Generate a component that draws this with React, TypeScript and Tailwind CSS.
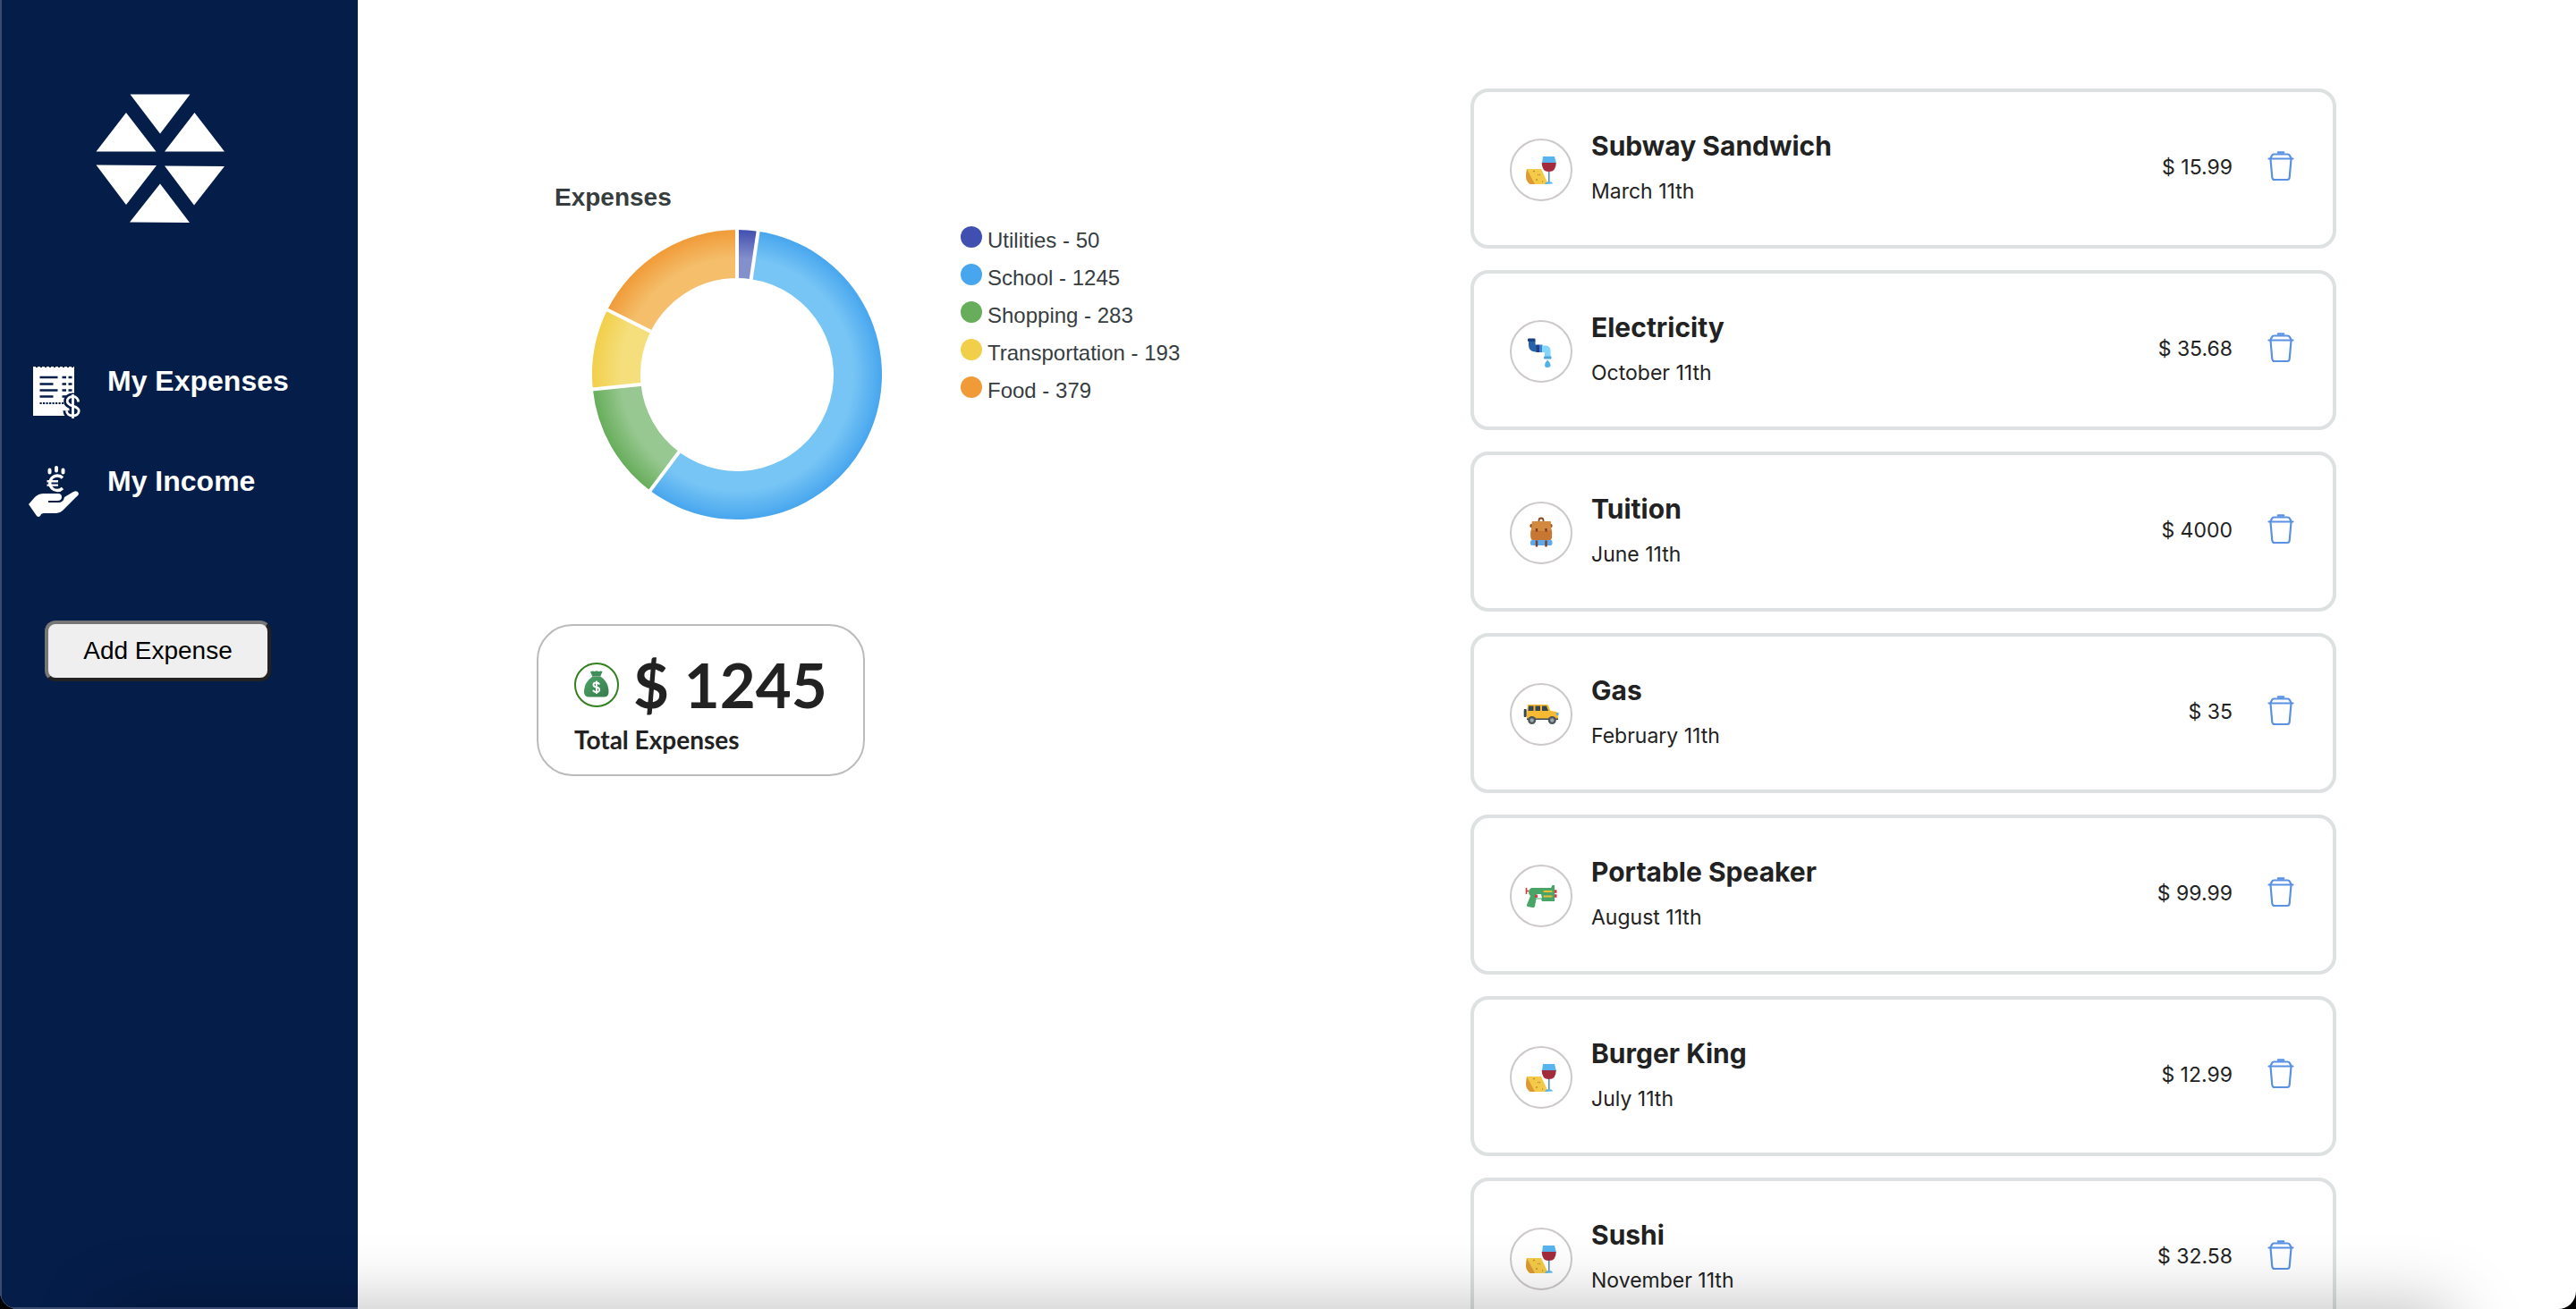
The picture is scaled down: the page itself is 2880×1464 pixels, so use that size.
import React from "react";

type IconName = "food" | "pipe" | "backpack" | "car" | "toy";

type Expense = {
  title: string;
  date: string;
  amount: string;
  icon: IconName;
};

const expenses: Expense[] = [
  { title: "Subway Sandwich", date: "March 11th", amount: "15.99", icon: "food" },
  { title: "Electricity", date: "October 11th", amount: "35.68", icon: "pipe" },
  { title: "Tuition", date: "June 11th", amount: "4000", icon: "backpack" },
  { title: "Gas", date: "February 11th", amount: "35", icon: "car" },
  { title: "Portable Speaker", date: "August 11th", amount: "99.99", icon: "toy" },
  { title: "Burger King", date: "July 11th", amount: "12.99", icon: "food" },
  { title: "Sushi", date: "November 11th", amount: "32.58", icon: "food" },
];

const slices = [
  { label: "Utilities", value: 50, outer: "#4150b0", inner: "#8490cb" },
  { label: "School", value: 1245, outer: "#48a6ee", inner: "#77c5f5" },
  { label: "Shopping", value: 283, outer: "#67ad5b", inner: "#98c891" },
  { label: "Transportation", value: 193, outer: "#f2cf4b", inner: "#f5df7d" },
  { label: "Food", value: 379, outer: "#f19b38", inner: "#f4be6b" },
];

function Logo() {
  return (
    <svg viewBox="0 0 144 144" className="h-36 w-36" fill="#fff" aria-hidden="true">
      <path d="M38.500 .5H105.500L72 44.500ZM.5 64.500H67.500L34 21ZM77 64.500H144L110.500 21ZM.5 79.500L68 80L34 124ZM77 80.500L144 81L110 124.500ZM38 143.500L72 100.500L105 144Z" />
    </svg>
  );
}

function ReceiptIcon() {
  const dollar = "M52.500 41.500c0-3.500-2.500-6-6-6s-6.300 2-6.300 5.200c0 6.600 13 4.200 13 10.800 0 3.500-3 5.500-6.700 5.500s-7-2-7-5.700M46.500 33v27";
  return (
    <svg viewBox="0 0 56 60" className="h-[60px] w-14" fill="none" aria-hidden="true">
      <path d="M2 3H48V57H2Z" fill="#fff" />
      <path d="M2 3H48" stroke="#fff" strokeWidth="2" strokeDasharray="3 2" />
      <path d="M9.500 14h20M9.500 21.500h15M9.500 28.500h20M9.500 35.500h15M34.500 14h4.500M41.500 14h4M34.500 21.500h4.500M41.500 21.500h4M34.500 28.500h4.500M41.500 28.500h4M34.500 35.500h4.500" stroke="#051d49" strokeWidth="2.500" />
      <path d="M9.500 43h28" stroke="#051d49" strokeWidth="2.200" strokeDasharray="2.200 1.300" />
      <path d={dollar} stroke="#051d49" strokeWidth="8" />
      <path d={dollar} stroke="#fff" strokeWidth="2.800" />
    </svg>
  );
}

function IncomeIcon() {
  return (
    <svg viewBox="0 0 56 58" className="h-[58px] w-14" fill="none" aria-hidden="true">
      <g stroke="#fff">
        <path d="M23.500 5.500v3M31 3v3.500M38.500 5.500v3" strokeWidth="4" strokeLinecap="round" />
        <path d="M38 14.500A8.300 8.300 0 1 0 38 26" strokeWidth="3.400" />
        <path d="M20.500 18.300H33M20.500 22.600H33" strokeWidth="2.400" />
      </g>
      <path d="M0 44L7 36Q11 32 17 32H33Q37 32 37 36Q37 40 32 40H22V42H33Q39 42 40 36L50 30Q55 28 56 32Q56 34 53 36L38 51Q35 54 31 54H17Q14 54 13 57Q11 59 9 57Z" fill="#fff" />
    </svg>
  );
}

function MoneyBag() {
  return (
    <svg viewBox="0 0 50 50" className="h-[50px] w-[50px]" aria-hidden="true">
      <defs>
        <linearGradient id="bag" x1="0" y1="0" x2="1" y2="1">
          <stop offset="0" stopColor="#4aa566" />
          <stop offset="1" stopColor="#397b4c" />
        </linearGradient>
      </defs>
      <circle cx="25" cy="25" r="24" fill="#fff" stroke="#34801f" strokeWidth="2" />
      <path d="M18 10q3-1 5 0q2-1.500 4 0q3-1 4.500 0L29.500 15H20Z" fill="#3f8f58" />
      <path d="M20 16H30Q38.500 22 38.500 33Q38.500 38.500 33 38.500H17Q11 38.500 11 33Q11 22 20 16Z" fill="url(#bag)" />
      <path d="M20 15.500h9.500" stroke="#8fa796" strokeWidth="1" />
      <path d="M28.300 24.500q-1-2-3.500-2c-4.500 0-4.500 4.500 0 5s4.500 5.500 0 5.500q-3 0-3.800-2.300M24.900 20.500v14.500" fill="none" stroke="#fff" strokeWidth="1.800" />
    </svg>
  );
}

function FoodArt() {
  return (
    <>
      <path d="M19 34H35L43 51H22Q18 47 18 42Z" fill="#f3cb48" />
      <path d="M19 34L28 51H23Q18 48 18 42Z" fill="#dd9a34" />
      <path d="M26 36.500h2M33 41l1-1M29 46h2M36 48h1M31 40.500h1" stroke="#c58a2c" strokeWidth="1.500" />
      <path d="M37 20H50L52 28H36Z" fill="#57b4ee" />
      <path d="M35.700 27H51.700Q51.700 37 43.700 37Q35.700 37 35.700 27Z" fill="#a32c3c" />
      <path d="M43.800 37v12" stroke="#4a8dbd" strokeWidth="1.500" />
      <path d="M39 51q1-3 4.800-3t4.200 2.500Z" fill="#5bb8ef" />
    </>
  );
}

function PipeArt() {
  return (
    <>
      <path d="M21 23H28.500V26.500Q28.500 28 30 28H32V35.500H28Q21 35 21 28Z" fill="#2862a8" />
      <rect x="20" y="20.500" width="8.500" height="3.500" rx="1" fill="#1d3f86" />
      <rect x="29.500" y="27.500" width="3.500" height="8.500" fill="#203f86" />
      <rect x="33" y="27.500" width="3.500" height="8.500" fill="#3e7fd0" />
      <path d="M36 28.500H40Q45.500 29 45.500 34V41H39V37Q39 36 38 36H36Z" fill="#83d5fa" />
      <rect x="38" y="40.500" width="8.500" height="3" rx="1" fill="#4ba3da" />
      <path d="M42 44.500Q45.500 48 45.500 50.500Q45.500 53 42 53Q39 53 39 50.500Q39 48 42 44.500Z" fill="#4eb3ea" />
    </>
  );
}

function BackpackArt() {
  return (
    <>
      <path d="M32.500 22.500V21q0-2.500 2.500-2.500t2.500 2.500v1.500" stroke="#8a4a20" strokeWidth="1.800" fill="none" />
      <rect x="22.500" y="25" width="25" height="4" rx="1.500" fill="#8a4a20" />
      <path d="M25 22H45.500L46.500 31Q47.500 33 47 41Q46 43.500 43 43.500H27Q24 43 23.500 41Q22.500 34 24 31Z" fill="#c87733" />
      <path d="M25 22H45.500L46 32Q40 34 24 32Z" fill="#d38a40" />
      <rect x="23" y="43" width="24.500" height="6" rx="2" fill="#5da9ee" />
      <path d="M30 30v3.500M40.500 30v3.500M30 43.500v7M40.500 43.500v7" stroke="#7b3d22" strokeWidth="2.400" />
    </>
  );
}

function CarArt() {
  return (
    <>
      <rect x="15.700" y="29" width="3" height="9" rx="1" fill="#39474d" />
      <path d="M19 38H54V41H19Z" fill="#39474d" />
      <path d="M20 24H41.500Q43 24 43.500 26L45.500 31L52 32Q54 33 54 36V39.500H19Q19 30 20 24Z" fill="#f6b933" />
      <path d="M21 25.500h5.500v5.500h-6ZM28.500 25.500h5.500v5.500h-5.500ZM36 25.500h5l2 5.500h-7Z" fill="#36454f" />
      <rect x="52" y="33" width="2.500" height="3" fill="#57b0e6" />
      <circle cx="24.700" cy="41.500" r="4.500" fill="#4a555b" />
      <circle cx="24.700" cy="41.500" r="2.200" fill="#9aa7ad" />
      <circle cx="47.300" cy="41.500" r="4.500" fill="#4a555b" />
      <circle cx="47.300" cy="41.500" r="2.200" fill="#9aa7ad" />
    </>
  );
}

function ToyArt() {
  return (
    <>
      <path d="M18.500 26v7M18.500 29.500h3" stroke="#d8363f" strokeWidth="1.600" />
      <path d="M49 30h3.500M49 35h3.500" stroke="#d8363f" strokeWidth="3.500" />
      <path d="M24 26H46L47.500 23H50V41H36L35 38.500H29.500L28 46.500Q27.500 48.500 25.500 48L20 47Q18.500 46.500 19 45L23 35Q21 34 21 30.500Q21.500 27 24 26Z" fill="#48a567" />
      <path d="M29.500 33h5.500l1 4.500h-7Z" fill="#fff" />
      <path d="M29.500 33.500v3.500" stroke="#d8363f" strokeWidth="2.800" />
      <path d="M38.500 30h8M38.500 35.500h8" stroke="#eebd34" strokeWidth="2.200" strokeLinecap="round" />
    </>
  );
}

const art: Record<IconName, () => React.ReactElement> = {
  food: FoodArt,
  pipe: PipeArt,
  backpack: BackpackArt,
  car: CarArt,
  toy: ToyArt,
};

function TrashIcon() {
  return (
    <svg viewBox="0 0 30 34" className="h-[34px] w-[30px]" fill="none" stroke="#5a91e3" strokeWidth="2.200" strokeLinecap="round" strokeLinejoin="round" aria-hidden="true">
      <path d="M12 1.500h6" strokeWidth="2.500" />
      <path d="M1.500 8.500h27" />
      <path d="M3.500 8l1.500-3q.8-1.500 2.500-1.500h15q1.700 0 2.500 1.500l1.500 3" />
      <path d="M3.500 9l1.800 20.500q.2 2.500 2.700 2.500h14q2.500 0 2.700-2.500L26.500 9" />
    </svg>
  );
}

function point(radius: number, angle: number) {
  return `${162 + radius * Math.sin(angle)} ${162 - radius * Math.cos(angle)}`;
}

function DonutChart() {
  const total = slices.reduce((sum, s) => sum + s.value, 0);
  let start = 0;
  return (
    <svg viewBox="0 0 324 324" className="mt-1 h-[324px] w-[324px] shrink-0" role="img" aria-label="Expenses by category">
      {slices.map((s) => {
        const end = start + (s.value / total) * Math.PI * 2;
        const large = end - start > Math.PI ? 1 : 0;
        const d = `M${point(162, start)}A162 162 0 ${large} 1 ${point(162, end)}L${point(108, end)}A108 108 0 ${large} 0 ${point(108, start)}Z`;
        start = end;
        return (
          <g key={s.label}>
            <radialGradient id={`g-${s.label}`} gradientUnits="userSpaceOnUse" cx="162" cy="162" r="162">
              <stop offset="0.8" stopColor={s.inner} />
              <stop offset="1" stopColor={s.outer} />
            </radialGradient>
            <path d={d} fill={`url(#g-${s.label})`} />
          </g>
        );
      })}
      {slices.map((s, i) => {
        const before = slices.slice(0, i).reduce((sum, p) => sum + p.value, 0);
        const a = (before / total) * Math.PI * 2;
        return <path key={s.label} d={`M${point(104, a)}L${point(166, a)}`} stroke="#fff" strokeWidth="4" />;
      })}
    </svg>
  );
}

function Sidebar() {
  return (
    <aside className="flex w-[400px] shrink-0 flex-col border-l-2 border-[#3a4a70] bg-[#051d49] pt-[105px] font-['Liberation_Sans',Arial,sans-serif]">
      <div className="pl-[105px]">
        <Logo />
      </div>
      <nav className="mt-[159px] flex flex-col gap-[52px] pl-[30px] text-[32px] font-bold leading-9 text-white">
        <a href="#expenses" className="flex h-[60px] items-start gap-[29px]">
          <span className="pl-[3px]">
            <ReceiptIcon />
          </span>
          <span>My Expenses</span>
        </a>
        <a href="#income" className="flex h-[60px] items-start gap-8">
          <IncomeIcon />
          <span>My Income</span>
        </a>
      </nav>
      <button
        type="button"
        className="ml-12 mt-[114px] h-[68px] w-[253px] rounded-xl border-4 border-b-[#222] border-l-[#767676] border-r-[#222] border-t-[#767676] bg-[#efefef] text-[28px] leading-8 text-black"
      >
        Add Expense
      </button>
    </aside>
  );
}

function Summary() {
  return (
    <section className="flex flex-col items-start pt-[205px]">
      <div className="pl-5 font-['Liberation_Sans',Arial,sans-serif] text-[#373d3f]">
        <h2 className="text-[28px] font-bold leading-8">Expenses</h2>
        <div className="mt-4 flex items-start pl-[42px]">
          <DonutChart />
          <ul className="ml-[88px] text-2xl">
            {slices.map((s) => (
              <li key={s.label} className="flex h-[42px] items-start gap-[6px]">
                <svg viewBox="0 0 24 24" className="h-6 w-6" aria-hidden="true">
                  <circle cx="12" cy="12" r="12" fill={s.outer} />
                </svg>
                <span className="leading-8">
                  {s.label} - {s.value}
                </span>
              </li>
            ))}
          </ul>
        </div>
      </div>
      <div className="mt-[117px] rounded-[40px] border-2 border-[#bbb] px-10 pb-4 pt-7 font-[Lato,sans-serif] font-bold text-[#222]">
        <div className="flex items-center gap-4">
          <MoneyBag />
          <span className="text-[69px] leading-[76px]">$ 1245</span>
        </div>
        <p className="text-[28px] leading-[46px]">Total Expenses</p>
      </div>
    </section>
  );
}

function ExpenseCard({ title, date, amount, icon }: Expense) {
  const Art = art[icon];
  return (
    <li className="flex h-[179px] shrink-0 items-start rounded-[20px] border-4 border-[#dde1e2] bg-white pl-10 pr-[43px] text-[#222]">
      <svg viewBox="0 0 70 70" className="mt-[52px] h-[70px] w-[70px] shrink-0" aria-hidden="true">
        <circle cx="35" cy="35" r="34" fill="#fff" stroke="#cdc8ca" strokeWidth="2" />
        <Art />
      </svg>
      <div className="ml-[21px] mt-10 flex-1">
        <h3 className="text-[30px] font-bold leading-10">{title}</h3>
        <p className="mt-[13px] text-[23px] leading-9">{date}</p>
      </div>
      <span className="mt-[66px] text-[23px] leading-9">$ {amount}</span>
      <button type="button" aria-label={`Delete ${title}`} className="ml-[39px] mt-[66px]">
        <TrashIcon />
      </button>
    </li>
  );
}

export default function App() {
  return (
    <div className="h-screen bg-black">
      <div className="relative flex h-full overflow-hidden rounded-b-[20px] bg-white">
        <Sidebar />
        <main className="grid flex-1 grid-cols-[1044fr_968fr] pl-[200px] pr-[268px]">
          <Summary />
          <ul className="flex min-h-0 flex-col gap-6 pt-[99px] font-[Inter,sans-serif]">
            {expenses.map((e) => (
              <ExpenseCard key={e.title} {...e} />
            ))}
          </ul>
        </main>
        <div className="pointer-events-none absolute left-[120px] right-[140px] top-full h-20 shadow-[0_0_80px_rgba(0,0,0,0.28)]" />
        <div className="pointer-events-none absolute bottom-0 left-0 h-[2px] w-[400px] bg-[#3a4a70]" />
      </div>
    </div>
  );
}
